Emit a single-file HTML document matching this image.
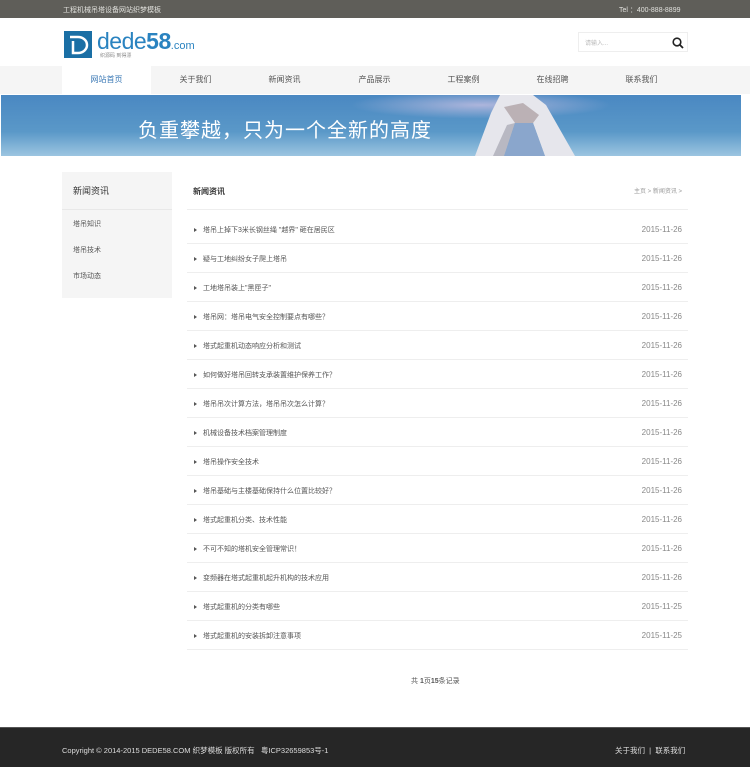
<!DOCTYPE html><html><head><meta charset="utf-8"><style>
*{margin:0;padding:0;box-sizing:border-box}
body{width:750px;height:767px;background:#fff;font-family:"Liberation Sans","Noto Sans CJK SC",sans-serif;position:relative;overflow:hidden;color:#333}
.abs{position:absolute}
.top{left:0;top:0;width:750px;height:18px;background:#5f5e59;color:#e0e0dc;font-size:7px}
.nav{left:0;top:66px;width:750px;height:28px;background:#f5f5f5}
.nav span{position:absolute;top:0;height:28px;line-height:28px;font-size:8px;color:#555;width:89px;text-align:center}
.side{left:62px;top:172px;width:110px;height:126px;background:#f5f5f5}
.row{position:absolute;left:187px;width:501px;height:29px;border-bottom:1px solid #eee;font-size:7px;color:#555}
.row .t{position:absolute;left:16px;top:10px}
.row .d{position:absolute;right:6px;top:10px;font-size:8px;color:#888}
.row .a{position:absolute;left:7px;top:13px;width:0;height:0;border-left:3px solid #555;border-top:2.5px solid transparent;border-bottom:2.5px solid transparent}
</style></head><body>
<div class="abs top"><span class="abs" style="left:63px;top:5px">工程机械吊塔设备网站织梦模板</span><span class="abs" style="left:619px;top:5px">Tel ：400-888-8899</span></div>
<div class="abs" style="left:64px;top:31px;width:28px;height:27px;background:#1a6fa5"></div>
<svg class="abs" style="left:64px;top:31px" width="28" height="27"><path d="M6 6h8a9 8 0 0 1 0 16H9V10" fill="none" stroke="#fff" stroke-width="2.5"/></svg>
<div class="abs" style="left:97px;top:28px;font-size:23px;color:#2a83c0;letter-spacing:-0.5px">dede<b style="font-weight:bold">58</b><span style="font-size:11px;letter-spacing:0">.com</span></div>
<div class="abs" style="left:100px;top:52px;font-size:5px;color:#888">织源码 到得漂</div>
<div class="abs" style="left:578px;top:32px;width:110px;height:20px;border:1px solid #eee"><span class="abs" style="left:6px;top:5px;font-size:6px;color:#bbb">请输入...</span>
<svg class="abs" style="left:93px;top:4px" width="12" height="12"><circle cx="5" cy="5" r="3.8" fill="none" stroke="#222" stroke-width="1.6"/><path d="M8 8l3 3" stroke="#222" stroke-width="1.8"/></svg></div>
<div class="abs nav">
<span style="left:62px;background:#fff;color:#3a78b5">网站首页</span><span style="left:151px">关于我们</span><span style="left:240px">新闻资讯</span><span style="left:330px">产品展示</span><span style="left:419px">工程案例</span><span style="left:508px">在线招聘</span><span style="left:597px">联系我们</span></div>
<div class="abs" style="left:1px;top:95px;width:740px;height:61px;background:linear-gradient(180deg,#4a88c2 0%,#5a98c8 60%,#9cc5e0 100%)">
<div class="abs" style="left:0;top:0;width:740px;height:61px;background:radial-gradient(ellipse at 480px 10px,rgba(205,195,228,.75),rgba(205,195,228,0) 130px)"></div>
<svg class="abs" style="left:470px;top:0" width="110" height="61"><polygon points="29,0 62,0 75,10 104,61 74,61 62,28 44,28 33,61 4,61 20,18" fill="#e6e6ec"/><polygon points="44,28 62,28 74,61 33,61" fill="#8aa6cc"/><polygon points="33,12 52,8 68,20 62,28 44,28" fill="#a89a9e" opacity=".7"/><polygon points="36,30 44,28 33,61 22,61" fill="#9a9aa6" opacity=".6"/></svg>
<div class="abs" style="left:137px;top:19px;font-size:20px;color:#fff;letter-spacing:1px">负重攀越，只为一个全新的高度</div></div>
<div class="abs side"><div style="height:38px;line-height:38px;padding-left:11px;font-size:9px;color:#333;border-bottom:1px solid #e8e8e8">新闻资讯</div>
<div style="font-size:7px;color:#555;padding-left:11px;line-height:26px;margin-top:2px">塔吊知识<br>塔吊技术<br>市场动态</div></div>
<div class="abs" style="left:187px;top:172px;width:501px;height:38px;border-bottom:1px solid #eee"><span class="abs" style="left:6px;top:14px;font-size:8px;font-weight:bold;color:#333">新闻资讯</span><span class="abs" style="right:6px;top:14px;font-size:6px;color:#999">主页 &gt; 新闻资讯 &gt;</span></div>
<div class="row" style="top:215px"><i class="a"></i><span class="t">塔吊上掉下3米长钢丝绳 "越界" 砸在居民区</span><span class="d">2015-11-26</span></div>
<div class="row" style="top:244px"><i class="a"></i><span class="t">疑与工地纠纷女子爬上塔吊</span><span class="d">2015-11-26</span></div>
<div class="row" style="top:273px"><i class="a"></i><span class="t">工地塔吊装上"黑匣子"</span><span class="d">2015-11-26</span></div>
<div class="row" style="top:302px"><i class="a"></i><span class="t">塔吊网：塔吊电气安全控制要点有哪些？</span><span class="d">2015-11-26</span></div>
<div class="row" style="top:331px"><i class="a"></i><span class="t">塔式起重机动态响应分析和测试</span><span class="d">2015-11-26</span></div>
<div class="row" style="top:360px"><i class="a"></i><span class="t">如何做好塔吊回转支承装置维护保养工作？</span><span class="d">2015-11-26</span></div>
<div class="row" style="top:389px"><i class="a"></i><span class="t">塔吊吊次计算方法，塔吊吊次怎么计算？</span><span class="d">2015-11-26</span></div>
<div class="row" style="top:418px"><i class="a"></i><span class="t">机械设备技术档案管理制度</span><span class="d">2015-11-26</span></div>
<div class="row" style="top:447px"><i class="a"></i><span class="t">塔吊操作安全技术</span><span class="d">2015-11-26</span></div>
<div class="row" style="top:476px"><i class="a"></i><span class="t">塔吊基础与主楼基础保持什么位置比较好？</span><span class="d">2015-11-26</span></div>
<div class="row" style="top:505px"><i class="a"></i><span class="t">塔式起重机分类、技术性能</span><span class="d">2015-11-26</span></div>
<div class="row" style="top:534px"><i class="a"></i><span class="t">不可不知的塔机安全管理常识！</span><span class="d">2015-11-26</span></div>
<div class="row" style="top:563px"><i class="a"></i><span class="t">变频器在塔式起重机起升机构的技术应用</span><span class="d">2015-11-26</span></div>
<div class="row" style="top:592px"><i class="a"></i><span class="t">塔式起重机的分类有哪些</span><span class="d">2015-11-25</span></div>
<div class="row" style="top:621px"><i class="a"></i><span class="t">塔式起重机的安装拆卸注意事项</span><span class="d">2015-11-25</span></div>
<div class="abs" style="left:411px;top:676px;font-size:7px;color:#555">共 <b>1</b>页<b>15</b>条记录</div>
<div class="abs" style="left:0;top:727px;width:750px;height:40px;background:#262626;border-top:1px solid #555;color:#ddd;font-size:7.5px">
<span class="abs" style="left:62px;top:17px">Copyright © 2014-2015 DEDE58.COM 织梦模板 版权所有 &nbsp; 粤ICP32659853号-1</span>
<span class="abs" style="left:615px;top:17px">关于我们 &nbsp;| &nbsp;联系我们</span></div>
</body></html>
